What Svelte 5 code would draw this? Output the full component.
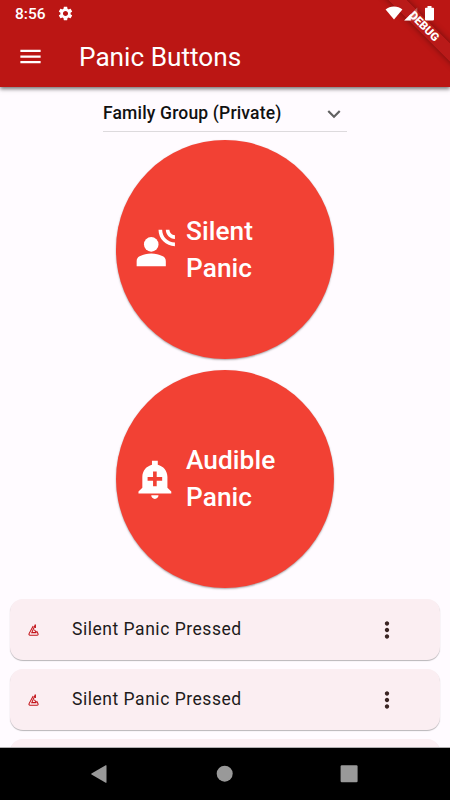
<script lang="ts">
  interface PanicButton {
    kind: "silent" | "audible";
    label: string;
  }

  const buttons: PanicButton[] = [
    { kind: "silent", label: "Silent" },
    { kind: "audible", label: "Audible" },
  ];

  const events = [
    { id: 1, title: "Silent Panic Pressed" },
    { id: 2, title: "Silent Panic Pressed" },
  ];

  const group = "Family Group (Private)";
</script>

<div class="screen">
  <header>
    <div class="status">
      <span class="time">8:56</span>
      <svg class="gear" viewBox="0 0 24 24">
        <path d="M19.14 12.94c.04-.3.06-.61.06-.94 0-.32-.02-.64-.07-.94l2.03-1.58c.18-.14.23-.41.12-.61l-1.92-3.32c-.12-.22-.37-.29-.59-.22l-2.39.96c-.5-.38-1.03-.7-1.62-.94l-.36-2.54c-.04-.24-.24-.41-.48-.41h-3.84c-.24 0-.43.17-.47.41l-.36 2.54c-.59.24-1.13.57-1.62.94l-2.39-.96c-.22-.08-.47 0-.59.22L2.74 8.87c-.12.21-.08.47.12.61l2.03 1.58c-.05.3-.09.63-.09.94s.02.64.07.94l-2.03 1.58c-.18.14-.23.41-.12.61l1.92 3.32c.12.22.37.29.59.22l2.39-.96c.5.38 1.03.7 1.62.94l.36 2.54c.05.24.24.41.48.41h3.84c.24 0 .44-.17.47-.41l.36-2.54c.59-.24 1.13-.56 1.62-.94l2.39.96c.22.08.47 0 .59-.22l1.92-3.32c.12-.22.07-.47-.12-.61l-2.01-1.58zM12 15.6c-1.98 0-3.6-1.62-3.6-3.6s1.62-3.6 3.6-3.6 3.6 1.62 3.6 3.6-1.62 3.6-3.6 3.6z" />
      </svg>
      <span class="spacer"></span>
      <svg class="wifi" viewBox="0 0 18 14">
        <path d="M9 13.6.6 3.4C2.8 1.5 5.8.4 9 .4s6.2 1.1 8.4 3z" />
      </svg>
      <svg class="signal" viewBox="0 0 14 14">
        <path d="M.2 13.5 13.3.4v13.1z" opacity="0.3" />
        <path d="M.2 13.5 6.8 6.9v6.6z" />
      </svg>
      <svg class="battery" viewBox="0 0 9 15">
        <path d="M2.5 0h4v1.7h1.7q.8 0 .8.8v11.1q0 .8-.8.8H.8q-.8 0-.8-.8V2.5q0-.8.8-.8h1.7z" />
      </svg>
    </div>
    <div class="toolbar">
      <button class="menu" aria-label="Open navigation menu">
        <svg viewBox="0 0 24 24"><path d="M3 18h18v-2H3v2zm0-5h18v-2H3v2zm0-7v2h18V6H3z" /></svg>
      </button>
      <h1>Panic Buttons</h1>
    </div>
    <div class="banner"><span>DEBUG</span></div>
  </header>

  <main>
    <button class="dropdown">
      <span>{group}</span>
      <svg viewBox="0 0 24 24"><path d="M7.41 8.59 12 13.17l4.59-4.58L18 10l-6 6-6-6z" /></svg>
    </button>

    {#each buttons as b (b.kind)}
      <button class="panic">
        <svg viewBox="0 0 24 24">
          {#if b.kind === "silent"}
            <circle cx="10" cy="9" r="4" />
            <path d="M16.39 15.56C14.71 14.7 12.53 14 10 14s-4.71.7-6.39 1.56C2.61 16.07 2 17.1 2 18.22V21h16v-2.78c0-1.12-.61-2.15-1.61-2.66z" />
            <path d="M16 1h-2c0 4.97 4.03 9 9 9V8c-3.86 0-7-3.14-7-7z" />
            <path d="M20 1h-2c0 2.76 2.24 5 5 5V4c-1.65 0-3-1.35-3-3z" />
          {:else}
            <path d="M10.01 21.01c0 1.1.89 1.99 1.99 1.99s1.99-.89 1.99-1.99h-3.98zM18.88 16.82V11c0-3.25-2.25-5.97-5.29-6.69V2h-3.18v2.31C7.37 5.03 5.12 7.75 5.12 11v5.82L3 18.94V20h18v-1.06l-2.12-2.12zM16 13.01h-3v3h-2v-3H8V11h3V8h2v3h3v2.01z" />
          {/if}
        </svg>
        <span>{b.label}<br />Panic</span>
      </button>
    {/each}

    <div class="events">
      {#each events as e (e.id)}
        <div class="card">
          <svg class="logo" viewBox="0 0 11 12">
            <path d="M5.2 2 1.1 9.6q-.5 1.6.9 1.6h7q1.6-.2.9-1.6L8.6 7" />
            <path d="M7.4.6v3.4M7.4.6 3.8 8.6h4.6M6.4 5.8l2 2.8" />
          </svg>
          <span class="title">{e.title}</span>
          <svg class="more" viewBox="0 0 24 24">
            <path d="M12 8c1.1 0 2-.9 2-2s-.9-2-2-2-2 .9-2 2 .9 2 2 2zm0 2c-1.1 0-2 .9-2 2s.9 2 2 2 2-.9 2-2-.9-2-2-2zm0 6c-1.1 0-2 .9-2 2s.9 2 2 2 2-.9 2-2-.9-2-2-2z" />
          </svg>
        </div>
      {/each}
      <div class="card"></div>
    </div>
  </main>

  <nav>
    <svg viewBox="0 0 20 20"><path d="M16.5 1.7v16.6q0 .8-.8.4L1.5 10.5q-.7-.5 0-1L15.7 1.3q.8-.4.8.4z" /></svg>
    <svg viewBox="0 0 20 20"><circle cx="9.7" cy="9.7" r="8" /></svg>
    <svg viewBox="0 0 20 20"><rect x="1.6" y="1.3" width="17" height="17" rx="1.2" /></svg>
  </nav>
</div>

<style>
  :global(body) {
    margin: 0;
  }
  .screen {
    position: relative;
    width: 450px;
    height: 800px;
    display: flex;
    flex-direction: column;
    overflow: hidden;
    background: #fffbff;
    font-family: Roboto, "Liberation Sans", sans-serif;
  }
  button {
    border: 0;
    padding: 0;
    background: none;
    font: inherit;
    color: inherit;
    text-align: left;
  }
  svg {
    display: block;
    flex: none;
    fill: currentColor;
  }
  header {
    position: relative;
    z-index: 1;
    flex: none;
    height: 87px;
    color: #fff;
    background: #bb1614;
    box-shadow: 0 2px 4px rgba(0, 0, 0, 0.55);
  }
  /* system icons stay above the debug ribbon */
  .status {
    position: relative;
    z-index: 1;
    display: flex;
    align-items: center;
    height: 26px;
    padding: 0 16px 0 15px;
  }
  .time {
    width: 42px;
    padding-top: 2px;
    font-size: 15.5px;
    font-weight: 500;
  }
  .gear {
    width: 17px;
    height: 17px;
  }
  .spacer {
    flex: 1;
  }
  .wifi {
    width: 18px;
    height: 14px;
  }
  .signal {
    width: 14px;
    height: 14px;
    margin: 1px 7px 0 1px;
  }
  .battery {
    width: 9px;
    height: 15px;
  }
  .toolbar {
    display: flex;
    align-items: center;
    height: 61px;
    padding-left: 17px;
  }
  .menu {
    width: 62px;
  }
  .menu svg {
    width: 27px;
    height: 27px;
  }
  h1 {
    margin: 0;
    font-size: 26.2px;
    font-weight: 400;
  }
  .banner {
    position: absolute;
    left: 363.7px;
    top: 19.5px;
    width: 120px;
    height: 13px;
    display: flex;
    align-items: center;
    justify-content: center;
    transform: rotate(45deg);
    background: rgba(183, 28, 28, 0.63);
    box-shadow: 0 0 6px rgba(0, 0, 0, 0.4);
    font-size: 11.5px;
    font-weight: 900;
    line-height: 13px;
  }
  main {
    flex: 1;
    min-height: 0;
    overflow: hidden;
    display: flex;
    flex-direction: column;
    align-items: center;
  }
  .dropdown {
    flex: none;
    display: flex;
    align-items: center;
    justify-content: space-between;
    width: 244px;
    height: 36px;
    margin: 9px 0 8px;
    border-bottom: 1px solid #dddadd;
    box-sizing: border-box;
    color: #111;
    font-size: 17.5px;
    font-weight: 500;
    letter-spacing: 0.17px;
  }
  .dropdown span {
    padding-bottom: 1px;
  }
  .dropdown svg {
    width: 26px;
    height: 26px;
    color: #616161;
  }
  .panic {
    flex: none;
    display: flex;
    align-items: center;
    gap: 9.5px;
    width: 218.5px;
    height: 218.5px;
    margin-bottom: 11px;
    padding: 0.5px 0 0 17px;
    box-sizing: border-box;
    border-radius: 50%;
    background: #f24134;
    box-shadow: 0 1px 2px rgba(0, 0, 0, 0.35);
    color: #fff;
    font-size: 26.25px;
    font-weight: 500;
    letter-spacing: 0.06px;
    line-height: 37px;
  }
  .panic svg {
    width: 43.75px;
    height: 43.75px;
  }
  .events {
    display: flex;
    flex-direction: column;
    gap: 9px;
    width: 430px;
  }
  .card {
    flex: none;
    display: flex;
    align-items: center;
    height: 61px;
    padding: 0 40px 0 18px;
    box-sizing: border-box;
    border-radius: 13px;
    background: #fbeef2;
    box-shadow: 0 1px 1px rgba(0, 0, 0, 0.28);
  }
  .logo {
    width: 11px;
    height: 12px;
    fill: none;
    stroke: #c4161c;
    stroke-width: 1.1;
  }
  .title {
    flex: 1;
    margin-left: 33px;
    padding-bottom: 1px;
    color: #201a1a;
    font-size: 17.5px;
    letter-spacing: 0.53px;
  }
  .more {
    width: 26px;
    height: 26px;
    color: #3b2524;
  }
  nav {
    z-index: 1;
    flex: none;
    display: flex;
    align-items: center;
    justify-content: space-between;
    height: 53px;
    padding: 0 91px 0 90px;
    box-sizing: border-box;
    border-top: 1px solid #b0aeb0;
    background: #000;
    color: #999;
  }
  nav svg {
    width: 20px;
    height: 20px;
  }
</style>
